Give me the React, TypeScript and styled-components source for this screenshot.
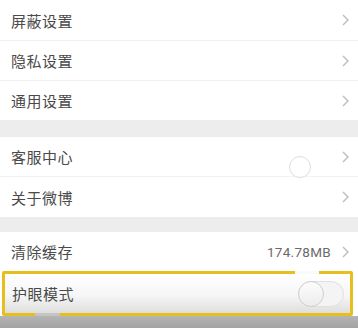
import React from 'react';
import styled, { createGlobalStyle } from 'styled-components';

const GlobalStyle = createGlobalStyle`
  html, body {
    margin: 0;
    padding: 0;
    background: #ededed;
  }
  body {
    font-family: "Noto Sans CJK SC", "Noto Sans", sans-serif;
  }
`;

const Screen = styled.div`
  position: relative;
  width: 358px;
  height: 328px;
  overflow: hidden;
  background: #ededed;
  display: flex;
  flex-direction: column;
`;

const Group = styled.div<{ $gap?: number }>`
  background: #fff;
  margin-bottom: ${(p) => p.$gap ?? 0}px;
  display: flex;
  flex-direction: column;
`;

const Row = styled.div<{ $h?: number; $last?: boolean }>`
  height: ${(p) => p.$h ?? 40}px;
  box-sizing: border-box;
  padding: 0 9px 0 11px;
  display: flex;
  align-items: center;
  justify-content: space-between;
  border-bottom: ${(p) => (p.$last ? 'none' : '1px solid #f2f2f2')};
`;

const Label = styled.span`
  font-size: 15px;
  color: #4a4a4a;
  letter-spacing: 0.5px;
`;

const Right = styled.div`
  display: flex;
  align-items: center;
  gap: 11px;
`;

const Value = styled.span`
  font-family: "Roboto", "Noto Sans", sans-serif;
  font-size: 13.5px;
  color: #6a6a6a;
  letter-spacing: 0.3px;
`;

const Highlight = styled.div`
  position: relative;
  margin: 0 5px 0 2px;
  height: 45px;
  box-sizing: border-box;
  border: 3px solid #e6bf1f;
  border-radius: 2px;
  background: linear-gradient(#ffffff 0%, #f6f6f6 55%, #dedede 100%);
  padding: 0 7px 0 7px;
  display: flex;
  align-items: center;
  justify-content: space-between;

  &::before,
  &::after {
    content: '';
    position: absolute;
    height: 3px;
  }
  &::before {
    top: -3px;
    left: 290px;
    width: 24px;
    background: #fafafa;
  }
  &::after {
    bottom: -3px;
    left: 30px;
    width: 25px;
    background: #c4c4c4;
  }
`;

const Bottom = styled.div`
  flex: 1;
  background: linear-gradient(#b4b4b4, #a2a2a2);
`;

const Switch = styled.div`
  position: relative;
  width: 46px;
  height: 26px;
  box-sizing: border-box;
  border: 1px solid #e0e0e0;
  border-radius: 13px;
  background: #f4f4f4;
  margin-right: -1px;
`;

const Knob = styled.div`
  position: absolute;
  left: -1px;
  top: -1px;
  width: 26px;
  height: 26px;
  box-sizing: border-box;
  border-radius: 50%;
  border: 1.5px solid #cfcfcf;
  background: linear-gradient(#fdfdfd, #ececec);
`;

const TouchDot = styled.div`
  position: absolute;
  left: 289px;
  top: 156px;
  width: 22px;
  height: 22px;
  box-sizing: border-box;
  border-radius: 50%;
  border: 1.5px solid #dedede;
  background: rgba(255, 255, 255, 0.6);
`;

const Chevron = () => (
  <svg width="7" height="12" viewBox="0 0 7 12">
    <path d="M1 1 L6 6 L1 11" fill="none" stroke="#bcbcbc" strokeWidth="1.4" />
  </svg>
);

export default function App() {
  return (
    <Screen>
      <GlobalStyle />
      <Group $gap={17}>
        <Row $h={41}>
          <Label>屏蔽设置</Label>
          <Chevron />
        </Row>
        <Row>
          <Label>隐私设置</Label>
          <Chevron />
        </Row>
        <Row $h={39} $last>
          <Label>通用设置</Label>
          <Chevron />
        </Row>
      </Group>
      <Group $gap={15}>
        <Row>
          <Label>客服中心</Label>
          <Chevron />
        </Row>
        <Row $last>
          <Label>关于微博</Label>
          <Chevron />
        </Row>
      </Group>
      <Group>
        <Row $h={39} $last>
          <Label>清除缓存</Label>
          <Right>
            <Value>174.78MB</Value>
            <Chevron />
          </Right>
        </Row>
        <Highlight>
          <Label>护眼模式</Label>
          <Switch>
            <Knob />
          </Switch>
        </Highlight>
      </Group>
      <Bottom />
      <TouchDot />
    </Screen>
  );
}
